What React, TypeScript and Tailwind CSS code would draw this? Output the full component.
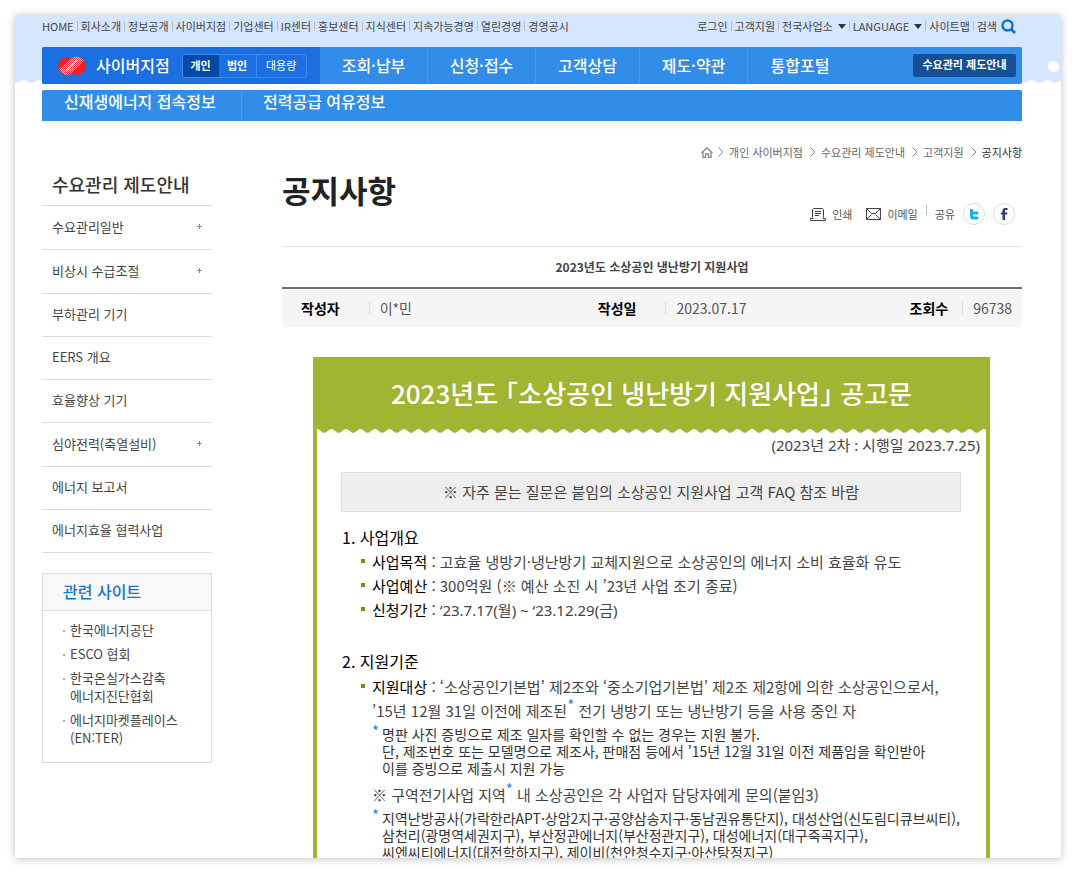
import React from 'react';

const topLinks = ['HOME', '회사소개', '정보공개', '사이버지점', '기업센터', 'IR센터', '홍보센터', '지식센터', '지속가능경영', '열린경영', '경영공시'];

const userLinks = [
  { label: '로그인' },
  { label: '고객지원' },
  { label: '전국사업소', menu: true },
  { label: 'LANGUAGE', menu: true },
  { label: '사이트맵' },
];

const sideItems = [
  { label: '수요관리일반', more: true },
  { label: '비상시 수급조절', more: true },
  { label: '부하관리 기기' },
  { label: 'EERS 개요' },
  { label: '효율향상 기기' },
  { label: '심야전력(축열설비)', more: true },
  { label: '에너지 보고서' },
  { label: '에너지효율 협력사업' },
];

const related = [['한국에너지공단'], ['ESCO 협회'], ['한국온실가스감축', '에너지진단협회'], ['에너지마켓플레이스', '(EN:TER)']];

const crumbs = ['개인 사이버지점', '수요관리 제도안내', '고객지원'];

function Logo() {
  return (
    <svg width="30" height="20" viewBox="0 0 30 20" aria-label="KEPCO" role="img">
      <defs>
        <pattern id="mesh" width="2" height="2" patternUnits="userSpaceOnUse">
          <rect width="1" height="1" fill="#fff" />
          <rect x="1" y="1" width="1" height="1" fill="#fff" />
        </pattern>
        <linearGradient id="fade" x1="8" y1="3" x2="20" y2="16" gradientUnits="userSpaceOnUse">
          <stop offset="0" stopColor="#fff" stopOpacity="0.45" />
          <stop offset="0.5" stopColor="#fff" />
          <stop offset="1" stopColor="#fff" stopOpacity="0.45" />
        </linearGradient>
        <mask id="band">
          <path d="M2 13 L15 2 C18 0 23 0 27 5 L14 17.500 C11 20 5 19 2 13Z" fill="url(#fade)" />
        </mask>
      </defs>
      <ellipse cx="10" cy="10" rx="9" ry="9" fill="#ea2227" />
      <ellipse cx="20" cy="10" rx="9" ry="9" fill="#ea2227" />
      <g mask="url(#band)">
        <rect width="30" height="20" fill="url(#mesh)" />
        <path d="M9 15 20 4" stroke="#fff" strokeWidth="1.500" strokeOpacity="0.7" />
      </g>
    </svg>
  );
}

function Chevron() {
  return (
    <svg width="6" height="10" viewBox="0 0 6 10" fill="none" stroke="#8a8a8a">
      <path d="M.5.5 5 5 .5 9.5" />
    </svg>
  );
}

function Star() {
  return <sup className="text-[15px] leading-none text-[#2f7fd6] align-baseline relative -top-1.5">*</sup>;
}

function Item({ label, children }: { label: string; children: React.ReactNode }) {
  return (
    <li className="flex">
      <span className="mt-[9px] mr-[7px] size-1 shrink-0 bg-[#7c8c0c]" />
      <p className="whitespace-nowrap">
        <span className="text-black">{label}</span> : {children}
      </p>
    </li>
  );
}

function Note({ lines }: { lines: string[] }) {
  return (
    <div className="flex pl-[30px] text-sm leading-[17px] text-[#333]">
      <span className="w-2.5 shrink-0 -mt-1 text-[15px] text-[#2f7fd6]">*</span>
      <p>
        {lines.map((l) => (
          <span key={l} className="block whitespace-nowrap">{l}</span>
        ))}
      </p>
    </div>
  );
}

function Header() {
  return (
    <header className="relative bg-[#d6e6ff]">
      <svg className="absolute top-[65px] left-0 w-full" height="4">
        <defs>
          <pattern id="wave" width="16" height="4" patternUnits="userSpaceOnUse">
            <path d="M0 4V3C3 3 5 0 8 0s5 3 8 3v1Z" fill="#fff" />
          </pattern>
        </defs>
        <rect width="100%" height="4" fill="url(#wave)" />
      </svg>
      <span className="absolute top-[46px] right-0.5 size-[11px] rounded-full bg-white" />
      <div className="relative mr-[39px] ml-[27px]">
        <div className="flex h-8 justify-between pb-2.5 text-[11px] text-[#444]">
          <ul className="flex items-center">
            {topLinks.map((l, i) => (
              <li key={l} className="flex items-center">
                {i > 0 && <span className="mx-[3px] h-2.5 w-px bg-[#bbb]" />}
                <a href="#">{l}</a>
              </li>
            ))}
          </ul>
          <ul className="flex items-center">
            {userLinks.map((l) => (
              <li key={l.label} className="flex items-center">
                <a href="#" className="flex items-center gap-[5px]">
                  {l.label}
                  {l.menu && (
                    <svg width="8" height="5" viewBox="0 0 8 5" fill="#333"><path d="M0 0h8L4 5Z" /></svg>
                  )}
                </a>
                <span className="mx-[3px] h-2.5 w-px bg-[#bbb]" />
              </li>
            ))}
            <li>
              <button type="button" className="mr-1.5 flex items-center gap-1">
                검색
                <svg width="15" height="15" viewBox="0 0 15 15" fill="none" stroke="#0e72d8" strokeWidth="2.4">
                  <circle cx="6.5" cy="6.5" r="5" />
                  <path d="m10 10 4 4" strokeWidth="3" />
                </svg>
              </button>
            </li>
          </ul>
        </div>
        <div className="flex h-[37px] overflow-hidden rounded-xs bg-[#328de8] text-white">
          <div className="flex w-[278px] shrink-0 items-center bg-[#1b6fe0] pl-[15px]">
            <Logo />
            <a href="#" className="ml-[9px] pb-0.5 text-base font-medium">사이버지점</a>
            <div className="ml-3 flex h-6 overflow-hidden rounded-xs border border-[#3b8bee] text-[11px]">
              <button type="button" className="w-9 bg-[#024aa5] font-bold">개인</button>
              <button type="button" className="w-[38px] border-r border-[#3b8bee] font-bold">법인</button>
              <button type="button" className="w-[49px]">대용량</button>
            </div>
          </div>
          <nav className="flex flex-1 items-center text-base font-medium">
            <a href="#" className="flex h-full w-[108px] items-center justify-center border-r border-[#4a9bec] pb-0.5">조회·납부</a>
            <a href="#" className="flex h-full w-[108px] items-center justify-center border-r border-[#4a9bec] pb-0.5">신청·접수</a>
            <a href="#" className="flex h-full w-[104px] items-center justify-center border-r border-[#4a9bec] pb-0.5">고객상담</a>
            <a href="#" className="flex h-full w-[108px] items-center justify-center border-r border-[#4a9bec] pb-0.5">제도·약관</a>
            <a href="#" className="flex h-full w-[104px] items-center justify-center pb-0.5">통합포털</a>
          </nav>
          <a href="#" className="mt-[7px] mr-1.5 flex h-[23px] w-[103px] shrink-0 items-center justify-center rounded-xs bg-[#174f96] pb-0.5 text-[11px] font-bold">수요관리 제도안내</a>
        </div>
      </div>
      <div className="bg-white pt-1.5 pr-[39px] pl-[27px]">
        <nav className="flex h-[31px] rounded-t-xs bg-[#328de8] text-base leading-[23px] font-medium text-white">
          <a href="#" className="w-[200px] border-r border-[#4a9bec] pl-[22px]">신재생에너지 접속정보</a>
          <a href="#" className="pl-[21px]">전력공급 여유정보</a>
        </nav>
      </div>
    </header>
  );
}

function Sidebar() {
  return (
    <aside className="w-[170px] shrink-0 pt-[46px]">
      <h2 className="h-[39px] border-b border-[#ddd] pl-2.5 text-lg leading-[34px] font-medium text-[#333]">수요관리 제도안내</h2>
      <ul className="text-[13px] text-[#444]">
        {sideItems.map((s) => (
          <li key={s.label} className={s.more ? 'h-11 border-b border-[#ddd]' : 'h-[43px] border-b border-[#ddd]'}>
            <a href="#" className="flex h-full items-center justify-between px-2.5 pb-0.5">
              {s.label}
              {s.more && (
                <svg width="5" height="5" viewBox="0 0 5 5" fill="none" stroke="#888"><path d="M0 2.5h5M2.5 0v5" /></svg>
              )}
            </a>
          </li>
        ))}
      </ul>
      <section className="mt-5 border border-[#ddd]">
        <h3 className="h-[37px] border-b border-[#ddd] bg-[#f8f8f8] pl-5 text-base leading-[34px] font-medium text-[#1874cd]">관련 사이트</h3>
        <ul className="flex flex-col gap-1.5 px-5 pt-2.5 pb-[15px] text-[13px] leading-[18px] text-[#444]">
          {related.map((r) => (
            <li key={r[0]} className="flex">
              <span className="mt-[9px] mr-[5px] size-0.5 shrink-0 bg-[#aaa]" />
              <a href="#">
                {r.map((t) => (
                  <span key={t} className="block whitespace-nowrap">{t}</span>
                ))}
              </a>
            </li>
          ))}
        </ul>
      </section>
    </aside>
  );
}

function Notice() {
  return (
    <article className="mr-8 ml-[31px] mt-[30px] border-4 border-t-0 border-[#a1b533] text-[15px] leading-6 text-[#444]">
      <h3 className="h-[72px] bg-[#a1b533] text-center text-[26px] leading-[72px] font-medium whitespace-nowrap text-white">
        2023년도 ｢소상공인 냉난방기 지원사업｣ 공고문
      </h3>
      <svg className="block w-full" height="4">
        <defs>
          <pattern id="scallop" width="14.5" height="4" patternUnits="userSpaceOnUse">
            <path d="M0 0h14.500C12 0 10 3.800 7.250 3.800S2.500 0 0 0Z" fill="#a1b533" />
          </pattern>
        </defs>
        <rect width="100%" height="4" fill="url(#scallop)" />
      </svg>
      <p className="pr-1.5 text-right font-['Noto_Sans','Noto_Sans_CJK_KR',sans-serif]">(2023년 2차 : 시행일 2023.7.25)</p>
      <p className="mt-[15px] mr-[25px] ml-6 border border-[#ddd] bg-[#eee] text-center leading-[38px]">
        ※ 자주 묻는 질문은 붙임의 소상공인 지원사업 고객 FAQ 참조 바람
      </p>
      <div className="mt-[13px] pl-[25px]">
        <h4 className="text-base leading-6 text-black">1. 사업개요</h4>
        <ul className="mt-px pl-[19px]">
          <Item label="사업목적">고효율 냉방기·냉난방기 교체지원으로 소상공인의 에너지 소비 효율화 유도</Item>
          <Item label="사업예산">300억원 (※ 예산 소진 시 ’23년 사업 조기 종료)</Item>
          <Item label="신청기간">
            <span className="font-['Noto_Sans','Noto_Sans_CJK_KR',sans-serif]">‘23.7.17(월) ~ ‘23.12.29(금)</span>
          </Item>
        </ul>
        <h4 className="mt-[27px] text-base leading-6 text-black">2. 지원기준</h4>
        <ul className="mt-0.5 pl-[19px]">
          <Item label="지원대상">
            ‘소상공인기본법’ 제2조와 ‘중소기업기본법’ 제2조 제2항에 의한 소상공인으로서,
          </Item>
        </ul>
        <p className="pl-[30px]">’15년 12월 31일 이전에 제조된<Star /> 전기 냉방기 또는 냉난방기 등을 사용 중인 자</p>
        <div className="pt-[3px]">
          <Note
            lines={[
              '명판 사진 증빙으로 제조 일자를 확인할 수 없는 경우는 지원 불가.',
              '단, 제조번호 또는 모델명으로 제조사, 판매점 등에서 ’15년 12월 31일 이전 제품임을 확인받아',
              '이를 증빙으로 제출시 지원 가능',
            ]}
          />
        </div>
        <p className="mt-1.5 pl-[30px]">※ 구역전기사업 지역<Star /> 내 소상공인은 각 사업자 담당자에게 문의(붙임3)</p>
        <div className="pt-[3px]">
          <Note
            lines={[
              '지역난방공사(가락한라APT·상암2지구·공양삼송지구·동남권유통단지), 대성산업(신도림디큐브씨티),',
              '삼천리(광명역세권지구), 부산정관에너지(부산정관지구), 대성에너지(대구죽곡지구),',
              '씨엔씨티에너지(대전학하지구), 제이비(천안청수지구·아산탕정지구)',
            ]}
          />
        </div>
      </div>
    </article>
  );
}

function Main() {
  return (
    <main className="min-w-0 flex-1 pt-[22px]">
      <nav className="flex h-[18px] items-center justify-end gap-[5px] text-[11px] text-[#666]">
        <svg width="12" height="11" viewBox="0 0 12 11" fill="none" stroke="#888" strokeWidth="1.300">
          <path d="M.5 6 6 1l5.500 5M2 5v5.400h2.500V7h3v3.400H10V5" />
        </svg>
        {crumbs.map((c) => (
          <React.Fragment key={c}>
            <Chevron />
            <a href="#" className="mr-0.5">{c}</a>
          </React.Fragment>
        ))}
        <Chevron />
        <span className="text-[#333]">공지사항</span>
      </nav>
      <h1 className="mt-2 h-[42px] text-[31px] leading-[42px] font-bold text-[#222]">공지사항</h1>
      <div className="-mt-[9px] flex h-6 items-center justify-end pr-[7px] text-[11px] text-[#555]">
        <button type="button" className="flex items-center gap-1.5">
          <svg width="16" height="13" viewBox="0 0 16 13" fill="none" stroke="#444">
            <path d="M2.500 9.500v-8l1-1h9l1 1v8M5 3.500h6M5 5.500h6M5 7.500h4M.5 10.500v2h15v-2h-3M.5 10.500h3" />
          </svg>
          인쇄
        </button>
        <button type="button" className="ml-3.5 flex items-center gap-1.5">
          <svg width="15" height="12" viewBox="0 0 15 12" fill="none" stroke="#444">
            <path d="M.5.5h14v11H.5ZM.5.5l5 5h4l5-5M.5 11.500l5-5M14.500 11.500l-5-5" />
          </svg>
          이메일
        </button>
        <span className="mx-2 mb-2 h-2.5 w-px bg-[#bbb]" />
        <span className="mr-2">공유</span>
        <button type="button" aria-label="트위터" className="flex size-[22px] items-center justify-center rounded-full border border-[#ddd]">
          <svg width="9" height="11" viewBox="0 0 9 11" fill="#18aeea">
            <path d="M0 .8Q0 0 .8 0H2.200Q3 0 3 .8V2.500H7.200Q8.500 2.500 8.500 4T7.200 5.500H3V6.500Q3 7.500 4 7.500H7.200Q8.500 7.500 8.500 9T7.200 10.500H3.500Q0 10.500 0 7Z" />
          </svg>
        </button>
        <button type="button" aria-label="페이스북" className="ml-2 flex size-[22px] items-center justify-center rounded-full border border-[#ddd]">
          <svg width="7" height="12" viewBox="0 0 7 12" fill="#2b3c74">
            <path d="M1.500 12V6.500H0v-2h1.500V3C1.500 1 2.600 0 4.500 0H6.500v2H5.200C4.300 2 4 2.400 4 3v1.500h2.400L6.100 6.500H4V12Z" />
          </svg>
        </button>
      </div>
      <section className="mt-5 border-t border-[#e6e6e6]">
        <h2 className="h-10 text-center text-xs leading-10 font-bold text-[#444]">2023년도 소상공인 냉난방기 지원사업</h2>
        <dl className="grid h-10 grid-cols-[1fr_1.05fr_auto] items-center border-t-2 border-[#6e6e6e] bg-[#f5f5f5] pr-2.5 pl-[19px] text-sm">
          <div className="flex items-center">
            <dt className="font-bold text-black">작성자</dt>
            <dd className="ml-[29px] flex items-center text-[#555]"><span className="mr-2.5 h-3 w-px bg-[#ddd]" />이*민</dd>
          </div>
          <div className="flex items-center">
            <dt className="font-bold text-black">작성일</dt>
            <dd className="ml-[29px] flex items-center text-[#555]"><span className="mr-2.5 h-3 w-px bg-[#ddd]" />2023.07.17</dd>
          </div>
          <div className="flex items-center">
            <dt className="font-bold text-black">조회수</dt>
            <dd className="ml-3.5 flex items-center text-[#555]"><span className="mr-2.5 h-3 w-px bg-[#ddd]" />96738</dd>
          </div>
        </dl>
      </section>
      <Notice />
    </main>
  );
}

export default function App() {
  return (
    <div lang="ko" className="h-screen bg-white p-[15px] font-['Noto_Sans_CJK_KR',sans-serif]">
      <div className="h-full overflow-hidden bg-white shadow-[0_1px_8px_rgba(0,0,0,0.25)]">
        <Header />
        <div className="flex gap-[70px] pr-[39px] pl-[27px]">
          <Sidebar />
          <Main />
        </div>
      </div>
    </div>
  );
}
